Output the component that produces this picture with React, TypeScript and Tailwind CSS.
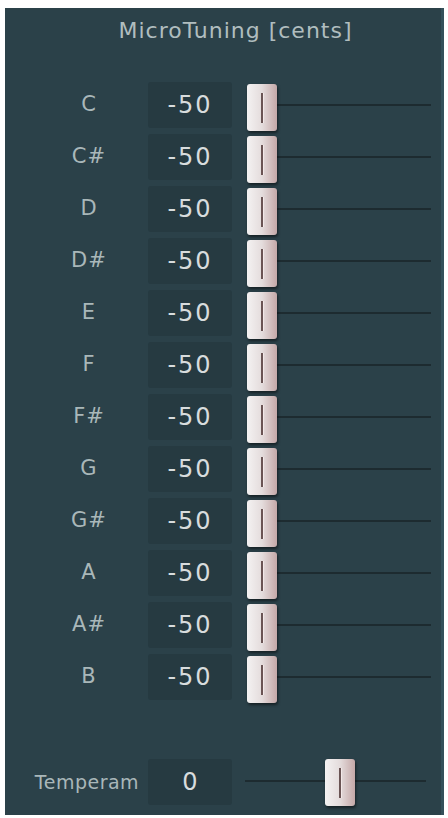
import React from "react";

const notes = ["C", "C#", "D", "D#", "E", "F", "F#", "G", "G#", "A", "A#", "B"];

const Thumb: React.FC<{ className?: string }> = ({ className }) => (
  <div
    className={`absolute w-[30px] h-[47px] rounded-[3px] bg-gradient-to-r from-[#f4f2f2] via-[#e4dcdc] to-[#c4a8a8] shadow-[1px_2px_3px_rgba(0,0,0,0.5)] ${className}`}
  >
    {/* grip line */}
    <div className="absolute left-[14px] top-[9px] w-[2px] h-[30px] bg-[#6a5454]" />
    <div className="absolute left-[16px] top-[9px] w-[1px] h-[30px] bg-[#f3e8e8]" />
  </div>
);

const Row: React.FC<{ note: string }> = ({ note }) => (
  <div className="flex items-center h-[46px]">
    <div className="w-[118px] text-center text-[21px] tracking-[1px] text-[#a9b7b9]">{note}</div>
    <div className="w-[84px] h-[46px] flex items-center justify-center bg-[#263a41] rounded-[3px] text-[24px] tracking-[2px] text-[#d8dcdd]">
      -50
    </div>
    <div className="relative flex-1 h-[46px]">
      <div className="absolute left-[30px] right-[10px] top-[22px] h-[2px] bg-[#1d2b30]" />
      <Thumb className="left-[15px] top-[2px]" />
    </div>
  </div>
);

export default function App() {
  return (
    <div className="w-[448px] h-[818px] bg-white pt-[8px] pl-[5px]" style={{ fontFamily: '"DejaVu Sans", "Open Sans", sans-serif' }}>
      <div className="w-[439px] h-[807px] bg-[#2b4149] border-r-[3px] border-[#34505a] pl-[25px] flex flex-col">
        <div className="h-[44px] flex items-center justify-center text-[22px] tracking-[1px] text-[#b0bdbf]">
          MicroTuning [cents]
        </div>
        <div className="mt-[30px] flex flex-col gap-[6px]">
          {notes.map((n) => (
            <Row key={n} note={n} />
          ))}
        </div>
        <div className="mt-[59px] flex items-center h-[46px]">
          <div className="w-[118px] text-center text-[19px] tracking-[0.5px] text-[#a9b7b9] pr-[4px]">Temperam</div>
          <div className="w-[84px] h-[46px] flex items-center justify-center bg-[#263a41] rounded-[3px] text-[24px] text-[#d8dcdd]">
            0
          </div>
          <div className="relative flex-1 h-[46px]">
            <div className="absolute left-[13px] right-[15px] top-[21px] h-[2px] bg-[#1d2b30]" />
            <Thumb className="left-[93px] top-[0px]" />
          </div>
        </div>
      </div>
    </div>
  );
}
